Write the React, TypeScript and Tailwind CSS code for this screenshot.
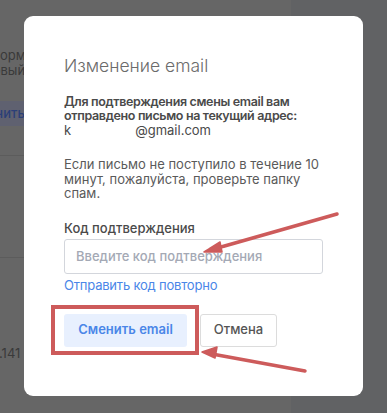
import React from 'react'

const font = { fontFamily: 'Inter, "Noto Sans", sans-serif' }

const Background = () => (
  <div className="flex h-[413px] w-full bg-[#666666]">
    <div className="flex w-[291px] flex-col">
      <div className="h-[48px]" />
      <div className="ml-[-9px] text-[13px] leading-[15px] text-[#3a3a3a]">
        <p>формулу</p>
        <p className="ml-[-6px]">новый</p>
      </div>
      <div className="mt-[23px] flex h-[25px] items-center bg-[#5f6170]">
        <span className="ml-[-32px] text-[13px] font-medium text-[#2b3f78]">Сменить</span>
      </div>
      <div className="mt-[29px] h-px bg-[#5c5c5c]" />
      <div className="mt-[101px] h-px bg-[#5c5c5c]" />
      <p className="ml-[-1px] mt-[86px] text-[13px] text-[#3a3a3a]">.141</p>
    </div>
    <div className="flex-1 bg-[#616264]" />
  </div>
)

const Arrows = () => (
  <svg className="pointer-events-none absolute left-0 top-0" width="387" height="413">
    <g stroke="#cd5b5b" strokeWidth="3.5" strokeLinecap="round" fill="#cd5b5b">
      <line x1="337" y1="214" x2="214" y2="249" />
      <polygon points="204,252 220,242 222,252" strokeWidth="1.5" strokeLinejoin="round" />
      <line x1="305" y1="371" x2="212" y2="354" />
      <polygon points="202,352 217,347 215,358" strokeWidth="1.5" strokeLinejoin="round" />
    </g>
  </svg>
)

const App = () => {
  return (
    <div className="relative h-[413px] w-[387px] overflow-hidden" style={font}>
      <Background />
      <div className="absolute left-[24px] top-[16px] h-[380px] w-[339px] rounded-[9px] bg-white px-[40px] pt-[38px]">
        <h2 className="text-[17.5px] font-light leading-[24px] text-[#6b6b6b]">Изменение email</h2>
        <p className="mt-[17px] text-[12.5px] font-semibold leading-[14px] tracking-[-0.35px] text-[#4a4a4a]">
          Для подтверждения смены email вам отправдено письмо на текущий адрес:{' '}
          <span className="whitespace-nowrap text-[13px] font-normal tracking-normal">
            k<span className="inline-block w-[64px]" />@gmail.com
          </span>
        </p>
        <p className="mt-[19px] text-[13px] leading-[14.5px] text-[#5a5a5a]">
          Если письмо не поступило в течение 10 минут, пожалуйста, проверьте папку спам.
        </p>
        <label className="mt-[20px] block text-[13px] font-medium leading-[14px] text-[#4a4a4a]">
          Код подтверждения
        </label>
        <input
          className="mt-[4px] block h-[35px] w-[259px] rounded-[3px] border border-[#d3d6dc] px-[11px] text-[13px] font-medium outline-none placeholder:text-[#a4a9b5]"
          placeholder="Введите код подтверждения"
        />
        <a className="mt-[4px] block text-[13px] leading-[14px] tracking-[-0.2px] text-[#4a86e8]">Отправить код повторно</a>
        <div className="relative mt-[22px] flex gap-[13px]">
          <button className="h-[33px] w-[123px] rounded-[3px] bg-[#e8f0fe] text-[13px] font-semibold text-[#4a86e8]">
            Сменить email
          </button>
          <button className="h-[33px] w-[77px] rounded-[3px] border border-[#dcdcdc] bg-white text-[13px] font-medium text-[#555555]">
            Отмена
          </button>
          <div className="pointer-events-none absolute left-[-13px] top-[-9px] h-[50px] w-[148px] border-[4px] border-[#cd5b5b]" />
        </div>
      </div>
      <Arrows />
    </div>
  )
}

export default App
